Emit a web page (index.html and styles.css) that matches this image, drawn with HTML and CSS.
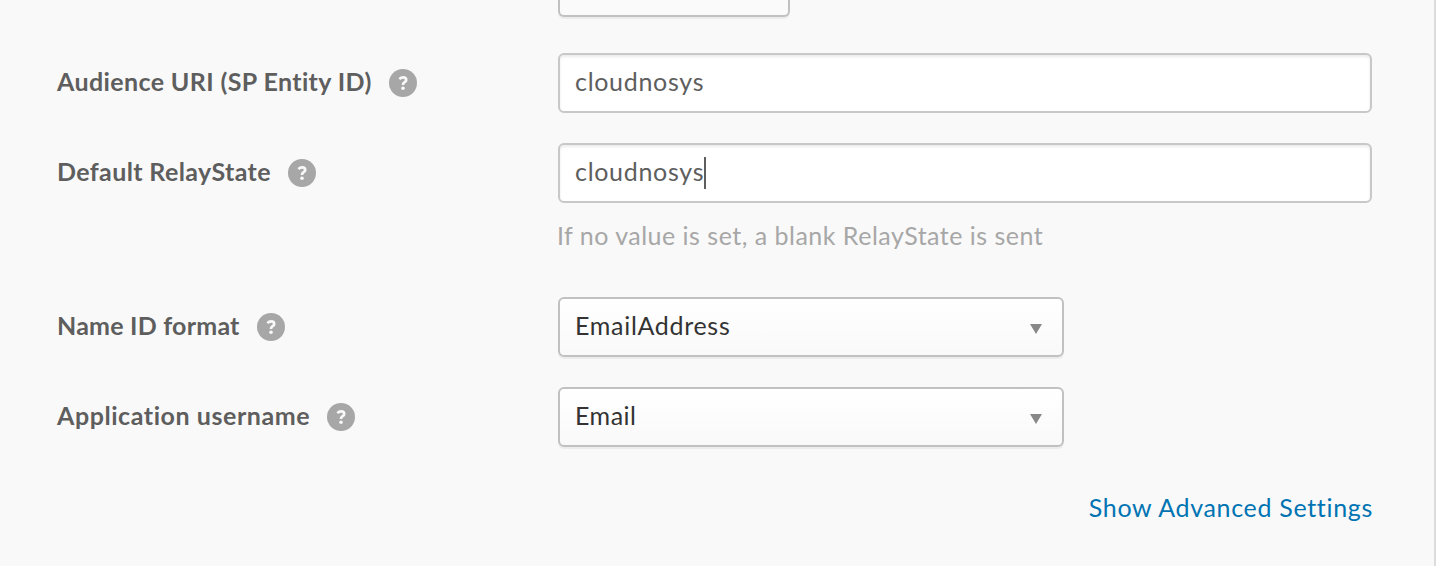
FILE: index.html
```html
<!DOCTYPE html>
<html lang="en">
<head>
<meta charset="utf-8">
<title>SAML Settings</title>
<link rel="stylesheet" href="styles.css">
</head>
<body>
<svg class="symbols" aria-hidden="true">
  <symbol id="help" viewBox="0 0 28 28">
    <circle cx="14" cy="14" r="14" fill="#a7a7a7"/>
    <path d="M10.4 10.2Q12 8.4 14.2 8.4Q17.2 8.4 17.2 10.9Q17.2 12.2 15.6 13.1Q13.9 14.1 14 16" fill="none" stroke="#f9f9f9" stroke-width="2.7"/>
    <circle cx="14" cy="19.3" r="1.8" fill="#f9f9f9"/>
  </symbol>
</svg>
<main class="panel">
  <div class="cut-button"></div>
  <div class="row">
    <label class="label"><span class="name audience">Audience URI (SP Entity ID)</span><svg class="help"><use href="#help"/></svg></label>
    <div class="input"><span class="value">cloudnosys</span></div>
  </div>
  <div class="row">
    <label class="label"><span class="name relay">Default RelayState</span><svg class="help"><use href="#help"/></svg></label>
    <div class="input"><span class="value">cloudnosys</span><span class="caret"></span></div>
  </div>
  <p class="hint"><span>If no value is set, a blank RelayState is sent</span></p>
  <div class="row">
    <label class="label"><span class="name format">Name ID format</span><svg class="help"><use href="#help"/></svg></label>
    <div class="select"><span class="value">EmailAddress</span><svg class="arrow" viewBox="0 0 12 10"><path d="M0 0H12L6 10Z" fill="#888"/></svg></div>
  </div>
  <div class="row">
    <label class="label"><span class="name username">Application username</span><svg class="help"><use href="#help"/></svg></label>
    <div class="select"><span class="value short">Email</span><svg class="arrow" viewBox="0 0 12 10"><path d="M0 0H12L6 10Z" fill="#888"/></svg></div>
  </div>
  <div class="footer"><a class="advanced">Show Advanced Settings</a></div>
</main>
</body>
</html>
```
FILE: styles.css
```css
* { box-sizing: border-box; }
body {
  margin: 0;
  background: #fff;
  font-family: Lato, sans-serif;
  font-size: 25px;
  line-height: 30px;
  font-variant-ligatures: none;
  overflow: hidden;
}
.symbols { display: none; }
.panel {
  width: 1436px;
  height: 566px;
  padding-left: 57px;
  background: #f9f9f9;
  border-right: 2px solid #dcdcdc;
}
.cut-button {
  width: 232px;
  height: 17px;
  margin: 0 0 36px 501px;
  border: 2px solid #c1c1c1;
  border-top: 0;
  border-radius: 0 0 6px 6px;
  background: #fafafa;
  box-shadow: 0 2px 0 #ececec;
}
.row {
  display: flex;
  height: 60px;
  margin-bottom: 30px;
}
.label {
  display: flex;
  align-items: center;
  width: 501px;
  color: #5e5e5e;
  font-weight: 700;
  white-space: nowrap;
}
.name, .value { padding-bottom: 4px; }
.audience { letter-spacing: 0.38px; }
.relay { letter-spacing: 0.38px; }
.format { letter-spacing: 0.22px; }
.username { letter-spacing: 0.56px; }
.help { width: 28px; height: 28px; margin-left: 17px; flex: none; }
.input, .select {
  display: flex;
  align-items: center;
  height: 60px;
  padding: 0 20px 0 15px;
  border: 2px solid #c8c8c8;
  border-radius: 6px;
}
.input {
  width: 814px;
  color: #5e5e5e;
  background: #fff;
  box-shadow: inset 0 2px 3px #ececec;
}
.select {
  width: 506px;
  justify-content: space-between;
  border-color: #c1c1c1;
  color: #333;
  background: linear-gradient(#fff, #f9f9f9);
  box-shadow: 0 2px 0 #ececec;
}
.value { letter-spacing: 0.7px; }
.short { letter-spacing: 0.5px; }
.caret { width: 2px; height: 32px; background: #5e5e5e; }
.arrow { width: 12px; height: 10px; margin-top: 3px; }
.hint {
  height: 30px;
  margin: -13px 0 47px 500px;
  color: #a7a7a7;
  letter-spacing: 0.49px;
}
.footer {
  display: flex;
  justify-content: flex-end;
  width: 1316px;
  padding-top: 15px;
}
.advanced { color: #0074b3; letter-spacing: 0.68px; }
```
